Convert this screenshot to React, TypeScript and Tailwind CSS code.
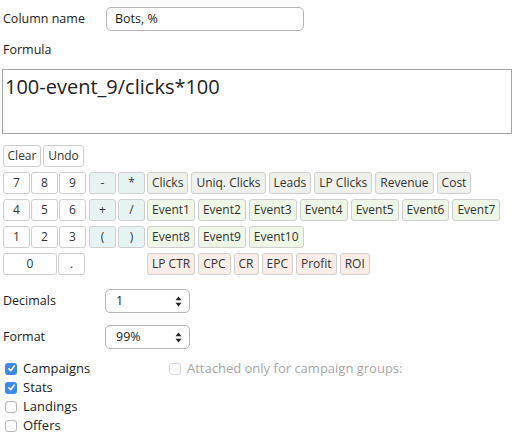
import React from 'react';

const numRows = [
  ['7', '8', '9'],
  ['4', '5', '6'],
  ['1', '2', '3'],
];
const opRows = [
  ['-', '*'],
  ['+', '/'],
  ['(', ')'],
];
const tokenRows = [
  { tone: 'bg-[#eff1ec]', items: ['Clicks', 'Uniq. Clicks', 'Leads', 'LP Clicks', 'Revenue', 'Cost'] },
  { tone: 'bg-[#eff7e8]', items: ['Event1', 'Event2', 'Event3', 'Event4', 'Event5', 'Event6', 'Event7'] },
  { tone: 'bg-[#eff7e8]', items: ['Event8', 'Event9', 'Event10'] },
  { tone: 'bg-[#fbeee9]', items: ['LP CTR', 'CPC', 'CR', 'EPC', 'Profit', 'ROI'] },
];

function Key({ label, className = '' }: { label: string; className?: string }) {
  return (
    <button
      type="button"
      className={`h-[22px] border border-[#cfcfcf] rounded-[3px] text-[12px] leading-none text-[#333] flex items-center justify-center ${className}`}
    >
      {label}
    </button>
  );
}

function Arrows() {
  return (
    <svg width="7" height="11" viewBox="0 0 7 11" className="shrink-0">
      <path d="M3.5 0.5 L6.5 4.2 H0.5 Z" fill="#222" />
      <path d="M3.5 10.5 L6.5 6.8 H0.5 Z" fill="#222" />
    </svg>
  );
}

function Select({ value }: { value: string }) {
  return (
    <div className="w-[85px] h-[24px] border border-[#b5b5b5] rounded-[5px] bg-white flex items-center justify-between pl-[10px] pr-[7px] text-[12.5px] text-[#222]">
      <span>{value}</span>
      <Arrows />
    </div>
  );
}

function Check({ checked, label, muted }: { checked?: boolean; label: string; muted?: boolean }) {
  return (
    <label className="flex items-center h-[19px]">
      <span
        className={`w-[12px] h-[12px] rounded-[3px] flex items-center justify-center ${
          checked ? 'bg-[#3f8ae8]' : muted ? 'bg-white border border-[#dcdcdc]' : 'bg-white border border-[#b8b8b8]'
        }`}
      >
        {checked && (
          <svg width="9" height="9" viewBox="0 0 9 9">
            <path d="M1.8 4.8 L3.7 6.8 L7.3 2" stroke="white" strokeWidth="1.5" fill="none" strokeLinecap="round" strokeLinejoin="round" />
          </svg>
        )}
      </span>
      <span className={`ml-[6px] text-[13px] ${muted ? 'text-[#a6a6a6]' : 'text-[#222]'}`}>{label}</span>
    </label>
  );
}

export default function App() {
  return (
    <div className="w-[520px] h-[438px] bg-white pt-[7px] text-[#222]" style={{ fontFamily: '"Open Sans", sans-serif' }}>
      {/* Column name */}
      <div className="flex items-center h-[24px] text-[12.5px]">
        <span className="ml-[3px] w-[103px]">Column name</span>
        <div className="w-[198px] h-[24px] border border-[#b5b5b5] rounded-[5px] flex items-center pl-[8px]">
          Bots, %
        </div>
      </div>

      {/* Formula */}
      <div className="mt-[10px] ml-[3px] text-[12.5px] leading-[18px]">Formula</div>
      <div className="mt-[10px] ml-[2px] w-[510px] h-[65px] border border-[#a6a6a6] px-[2px] pt-[4px] text-[20px] leading-[26px] text-[#222]">
        100-event_9/clicks*100
      </div>

      {/* Keypad */}
      <div className="mt-[11px] ml-[3px] flex flex-col gap-[5px]">
        <div className="flex gap-[2px]">
          <Key label="Clear" className="w-[38px] bg-white" />
          <Key label="Undo" className="w-[41px] bg-white" />
        </div>
        {tokenRows.map((row, i) => (
          <div key={i} className="flex items-center">
            <div className="w-[83px] flex gap-[1px]">
              {i < 3 ? (
                numRows[i].map((n) => <Key key={n} label={n} className="w-[27px] bg-white" />)
              ) : (
                <>
                  <Key label="0" className="w-[54px] bg-white" />
                  <Key label="." className="w-[27px] bg-white" />
                </>
              )}
            </div>
            <div className="ml-[3px] w-[56px] flex gap-[2px]">
              {i < 3 &&
                opRows[i].map((o) => <Key key={o} label={o} className="w-[27px] bg-[#e8f3f4]" />)}
            </div>
            <div className="ml-[2px] flex gap-[3px]">
              {row.items.map((t) => (
                <Key key={t} label={t} className={`px-[4px] ${row.tone}`} />
              ))}
            </div>
          </div>
        ))}
      </div>

      {/* Decimals / Format */}
      <div className="mt-[14px] flex items-center text-[12.5px]">
        <span className="ml-[3px] w-[102px]">Decimals</span>
        <Select value="1" />
      </div>
      <div className="mt-[12px] flex items-center text-[12.5px]">
        <span className="ml-[3px] w-[102px]">Format</span>
        <Select value="99%" />
      </div>

      {/* Attach */}
      <div className="mt-[10px] ml-[5px] flex">
        <div className="w-[164px] flex flex-col">
          <Check checked label="Campaigns" />
          <Check checked label="Stats" />
          <Check label="Landings" />
          <Check label="Offers" />
        </div>
        <div>
          <Check muted label="Attached only for campaign groups:" />
        </div>
      </div>
    </div>
  );
}
